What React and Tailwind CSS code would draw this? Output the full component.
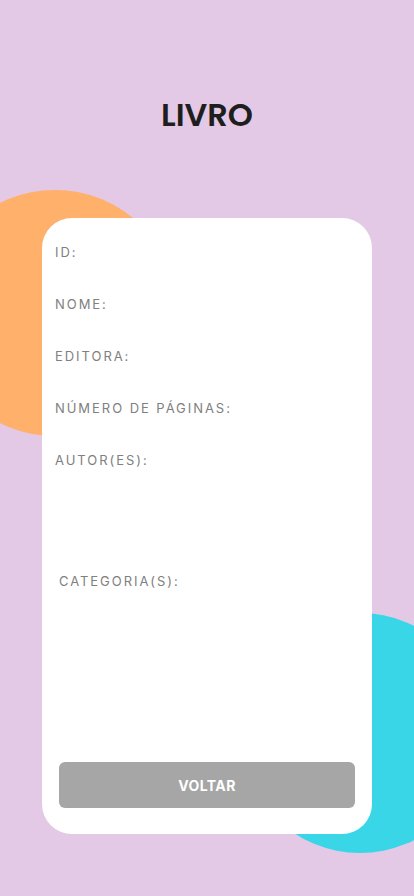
import React from 'react';

const fields = ['ID:', 'NOME:', 'EDITORA:', 'NÚMERO DE PÁGINAS:', 'AUTOR(ES):'];

const App = () => {
  return (
    <div className="relative w-[414px] h-[896px] overflow-hidden bg-[#e3c9e5]" style={{ fontFamily: 'Inter, "Open Sans", sans-serif' }}>
      {/* decorative circles */}
      <div className="absolute left-[-68px] top-[190px] w-[246px] h-[246px] rounded-full bg-[#ffb06b]" />
      <div className="absolute left-[240px] top-[613px] w-[240px] h-[240px] rounded-full bg-[#38d6e6]" />

      <div className="relative flex flex-col items-center">
        <h1 className="mt-[94px] h-[42px] text-[32px] leading-[42px] font-semibold text-[#1e1e1e]" style={{ fontFamily: 'Poppins, "Open Sans", sans-serif' }}>
          LIVRO
        </h1>

        <div className="mt-[82px] w-[330px] h-[616px] bg-white rounded-[30px] flex flex-col px-[13px]">
          <div className="flex flex-col gap-[34px] pt-[25px]">
            {fields.map((f) => (
              <p key={f} className="h-[18px] text-[13px] leading-[18px] tracking-[0.15em] text-[#808080]">
                {f}
              </p>
            ))}
          </div>
          <p className="mt-[103px] ml-[4px] h-[18px] text-[13px] leading-[18px] tracking-[0.15em] text-[#808080]">
            CATEGORIA(S):
          </p>
          <button className="mt-auto mb-[26px] ml-[4px] w-[296px] h-[46px] rounded-[6px] bg-[#a6a6a6] text-white text-[14px] font-bold tracking-[0.03em]">
            VOLTAR
          </button>
        </div>
      </div>
    </div>
  );
};

export default App;
